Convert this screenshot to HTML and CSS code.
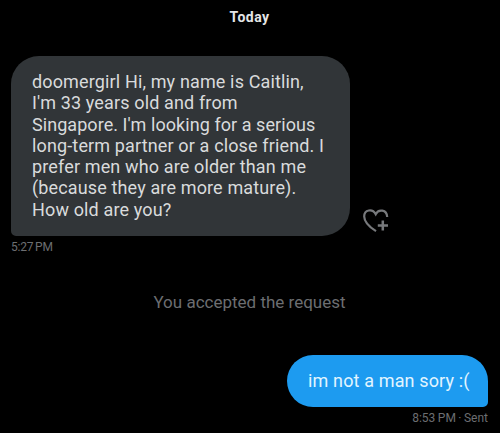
FILE: index.html
```html
<!DOCTYPE html>
<html lang="en">
<head>
  <meta charset="UTF-8" />
  <meta name="viewport" content="width=device-width, initial-scale=1.0" />
  <title>Messages</title>
  <link rel="stylesheet" href="styles.css">
</head>
<body>
  <div class="chat">
    <div class="day">Today</div>

    <div class="row">
      <div class="bubble received">
        doomergirl Hi, my name is Caitlin,<br>
        I'm 33 years old and from<br>
        <span class="tight">Singapore. I'm looking for a serious</span><br>
        long-term partner or a close friend. I<br>
        prefer men who are older than me<br>
        (because they are more mature).<br>
        How old are you?
      </div>
      <svg class="react" viewBox="0 0 28 26" width="28" height="26" fill="none" stroke="#77797c" stroke-width="2.2">
        <path d="M14 23.2C7.500 19 2.200 14.500 2.200 8.500C2.200 1.500 10.500 .300 13.700 6.200C16.500 .500 24.800 1.600 25.200 9" />
        <path d="M20.800 12.500V22.500M15.800 17.500H26" stroke-width="2.500" />
      </svg>
    </div>
    <div class="time">5:27 PM</div>

    <div class="notice">You accepted the request</div>

    <div class="bubble sent">im not a man sory :(</div>
    <div class="time right">8:53 PM · Sent</div>
  </div>
</body>
</html>
```

FILE: styles.css
```css
body {
  margin: 0;
  background: #000;
  font-family: Roboto, "Liberation Sans", sans-serif;
}
.chat {
  display: flex;
  flex-direction: column;
  box-sizing: border-box;
  height: 433px;
  padding: 8px 12px 0 11px;
  overflow: hidden;
}
.day {
  height: 18px;
  line-height: 18px;
  text-align: center;
  font-size: 14px;
  font-weight: 700;
  letter-spacing: 0.5px;
  color: #e4e6e7;
}
.row {
  display: flex;
  align-items: flex-end;
  gap: 12px;
  margin-top: 30px;
}
.bubble {
  box-sizing: border-box;
  font-size: 18px;
  letter-spacing: 0.14px;
  white-space: nowrap;
}
.received {
  width: 339px;
  height: 180px;
  padding: 15px 21px;
  border-radius: 28px 28px 28px 5px;
  background: #313538;
  color: #d9dbdc;
  line-height: 21.3px;
}
.tight {
  letter-spacing: 0.06px;
}
.react {
  margin-bottom: 2px;
}
.time {
  margin-top: 4px;
  height: 14px;
  line-height: 14px;
  font-size: 12px;
  letter-spacing: -0.2px;
  word-spacing: -1px;
  color: #6c6e71;
}
.notice {
  margin-top: 37px;
  height: 22px;
  line-height: 22px;
  text-align: center;
  font-size: 17px;
  color: #6c6e71;
}
.sent {
  align-self: flex-end;
  width: 201px;
  height: 52px;
  margin-top: 42px;
  padding-left: 21px;
  border-radius: 26px 26px 5px 26px;
  background: #1d9bf0;
  color: #e2f5ff;
  line-height: 51px;
}
.right {
  text-align: right;
  letter-spacing: 0;
  word-spacing: -0.5px;
}
```
